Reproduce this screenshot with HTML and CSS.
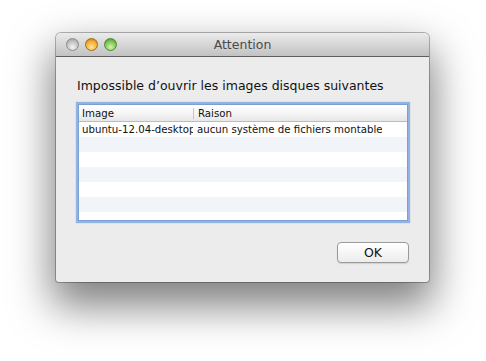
FILE: index.html
```html
<!DOCTYPE html>
<html lang="fr">
<head>
    <meta charset="UTF-8">
    <meta name="viewport" content="width=device-width, initial-scale=1.0">
    <title>Attention</title>
    <link rel="stylesheet" href="styles.css">
</head>
<body>
    <div class="window">
        <div class="titlebar">
            <div class="lights">
                <span class="light light_close"></span>
                <span class="light light_min"></span>
                <span class="light light_zoom"></span>
            </div>
            <div class="title">Attention</div>
        </div>

        <div class="content">
            <p class="message">Impossible d’ouvrir les images disques suivantes</p>

            <div class="list">
                <div class="list_head">
                    <div class="cell cell_image">Image</div>
                    <div class="cell cell_reason">Raison</div>
                </div>
                <div class="list_row">
                    <div class="cell cell_image">ubuntu-12.04-desktop-i386.iso</div>
                    <div class="cell cell_reason">aucun système de fichiers montable</div>
                </div>
                <div class="list_row"></div>
                <div class="list_row"></div>
                <div class="list_row"></div>
                <div class="list_row"></div>
                <div class="list_row"></div>
                <div class="list_row"></div>
            </div>

            <div class="actions">
                <button class="ok">OK</button>
            </div>
        </div>
    </div>
</body>
</html>
```

FILE: styles.css
```css
html{
    background: #fff;
}

body{
    margin: 0;
    min-height: 361px;
    box-sizing: border-box;
    padding: 33px 0 0 56px;
    font-family: "DejaVu Sans", "Noto Sans", sans-serif;
}

.window{
    width: 373px;
    height: 249px;
    box-sizing: border-box;
    background: #ececec;
    border-radius: 5px 5px 3px 3px;
    overflow: hidden;
    box-shadow: 0 0 0 1px rgba(0,0,0,0.28), 0 20px 42px 4px rgba(0,0,0,0.5);
}

/* barre de titre */
.titlebar{
    display: grid;
    grid-template-columns: 1fr auto 1fr;
    align-items: center;
    height: 23px;
    background: linear-gradient(#ebebeb, #d2d2d2 60%, #c2c2c2);
    border-bottom: 1px solid #5c5c5c;
}

.lights{
    display: flex;
    gap: 6px;
    padding-left: 10px;
}

.light{
    width: 11px;
    height: 11px;
    border-radius: 50%;
    border: 1px solid rgba(0,0,0,0.35);
}

.light_close{
    background: radial-gradient(circle at 50% 75%, #f4f4f4, #c4c4c4 55%, #9a9a9a);
    border-color: #8a8a8a;
}

.light_min{
    background: radial-gradient(circle at 50% 75%, #ffe39a, #f5b333 55%, #b6741b);
    border-color: #a06a1c;
}

.light_zoom{
    background: radial-gradient(circle at 50% 75%, #d4f5a8, #83c75a 55%, #3f8b29);
    border-color: #4b8a32;
}

.title{
    font-size: 12.5px;
    color: #4a4a4a;
}

/* contenu */
.content{
    padding: 21px 21px 0 22px;
}

.message{
    margin: 0 0 0 -1px;
    font-size: 12.5px;
    line-height: 16px;
    color: #111;
}

.list{
    margin-top: 10px;
    height: 117px;
    box-sizing: border-box;
    background: #fff;
    border: 1px solid #7a9fd4;
    box-shadow: 0 0 1px 2px rgba(120,160,220,0.75);
    overflow: hidden;
    font-size: 10.2px;
    color: #111;
}

.list_head{
    display: flex;
    height: 16px;
    align-items: center;
    background: linear-gradient(#fff, #f3f3f3 60%, #e6e6e6);
    border-bottom: 1px solid #bcbcbc;
}

.list_head .cell_reason{
    border-left: 1px solid #c4c4c4;
    height: 11px;
    line-height: 11px;
}

.list_row{
    display: flex;
    height: 15px;
    align-items: center;
}

.list_row:nth-child(odd){
    background: #f1f5fa;
}

.cell{
    white-space: nowrap;
    overflow: hidden;
}

.cell_image{
    flex: none;
    width: 111px;
    padding-left: 3px;
}

.cell_reason{
    padding-left: 4px;
}

.actions{
    display: flex;
    justify-content: flex-end;
    margin-top: 21px;
    margin-right: -1px;
}

.ok{
    width: 72px;
    height: 21px;
    padding: 0;
    font-family: inherit;
    font-size: 12.5px;
    color: #111;
    background: linear-gradient(#fff, #f6f6f6 50%, #ececec);
    border: 1px solid #9a9a9a;
    border-radius: 4px;
    box-shadow: 0 1px 1px rgba(0,0,0,0.12);
}
```
